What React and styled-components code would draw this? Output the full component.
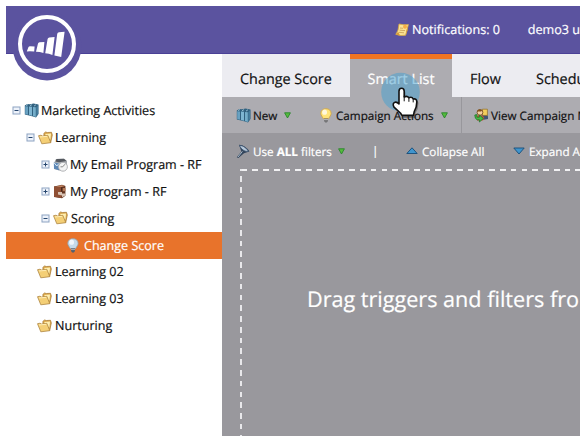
import React from 'react';
import styled, { createGlobalStyle, css } from 'styled-components';

const Global = createGlobalStyle`
  body { margin: 0; background: #fff; font-family: "Open Sans", sans-serif; color: #111; text-rendering: geometricPrecision; -webkit-text-stroke: 0.2px currentColor; }
  * { box-sizing: border-box; }
  svg { display: block; flex: none; overflow: visible; }
`;

const Page = styled.div`
  width: 587px;
  height: 443px;
  padding: 6px 7px 7px 6px;
  overflow: hidden;
`;
const Frame = styled.div`
  position: relative;
  display: flex;
  flex-direction: column;
  width: 574px;
  height: 430px;
  overflow: hidden;
`;
const Header = styled.header`
  display: flex;
  flex: none;
  align-items: center;
  height: 48px;
  padding-left: 389px;
  background: #5b539f;
  border-bottom: 1px solid #4a4096;
  color: #fff;
  font-size: 12.6px;
  white-space: nowrap;
`;
const Notice = styled.span`
  width: 117px;
  margin-left: 3px;
`;
const Logo = styled.div`
  position: absolute;
  left: 5px;
  top: 4px;
`;
const Body = styled.div`
  display: flex;
  flex: 1;
  min-height: 0;
`;
const Sidebar = styled.nav`
  flex: none;
  width: 216px;
  padding-top: 43.5px;
`;
const TreeRow = styled.div`
  display: flex;
  align-items: center;
  height: 26.85px;
  padding-left: ${(p) => p.$indent}px;
  font-size: 12.55px;
  white-space: nowrap;
  ${(p) => p.$selected && css`
    background: #e8732b;
    color: #fff;
  `}
`;
const Toggle = styled.span`
  display: flex;
  width: 12px;
`;
const TreeIcon = styled.span`
  display: flex;
  width: ${(p) => p.$w || 18}px;
`;
const Main = styled.main`
  display: flex;
  flex-direction: column;
  flex: 1;
  min-width: 0;
  overflow: hidden;
  background: #99989d;
`;
const Tabs = styled.div`
  display: flex;
  flex: none;
  height: 43px;
  background: #ececf1;
`;
const Tab = styled.div`
  display: flex;
  flex: none;
  align-items: center;
  padding-left: 18px;
  width: ${(p) => p.$w}px;
  padding-top: 7px;
  font-size: 14.4px;
  white-space: nowrap;
  ${(p) => p.$active && css`
    background: #adacb1;
    border-top: 5px solid #ef7423;
    padding-top: 2px;
    color: #fff;
  `}
`;
const Bar = styled.div`
  display: flex;
  flex: none;
  align-items: center;
  height: 36px;
  padding-left: 14px;
  font-size: ${(p) => p.$size}px;
  white-space: nowrap;
  color: ${(p) => (p.$dark ? '#fff' : '#111')};
  background: ${(p) => (p.$dark ? '#99989d' : '#adacb1')};
`;
const BarItem = styled.div`
  display: flex;
  flex: none;
  align-items: center;
  width: ${(p) => p.$w}px;
`;
const BarIcon = styled.span`
  display: flex;
  flex: none;
  width: ${(p) => p.$w}px;
`;
const BarLabel = styled.span`
  flex: none;
  padding-top: 2px;
  width: ${(p) => p.$w}px;
`;
const Divider = styled.div`
  flex: none;
  width: 1px;
  height: 36px;
  margin-right: 12px;
  background: #98979c;
`;
const Canvas = styled.section`
  flex: 1;
  margin-left: 18px;
  background:
    repeating-linear-gradient(90deg, transparent 0 1.5px, #f1f1f3 1.5px 7.2px, transparent 7.2px 10.77px) 0 0 / 100% 2px no-repeat,
    repeating-linear-gradient(180deg, #e8e8eb 0 2px, transparent 2px 7.1px, #e8e8eb 7.1px 10.77px) 0 0 / 2px 100% no-repeat;
`;
const Hint = styled.p`
  margin: 115px 0 0 67px;
  font-size: 21.6px;
  line-height: 32px;
  color: #fff;
  white-space: nowrap;
`;
const Pointer = styled.div`
  position: absolute;
  left: 375px;
  top: 66px;
`;

const LogoMark = () => (
  <svg width="72" height="72" viewBox="0 0 72 72">
    <circle cx="36" cy="36" r="34.5" fill="#5b539f" />
    <circle cx="36" cy="34" r="27" fill="#5b539f" stroke="#fff" strokeWidth="4" />
    <path d="M15.8 41.5 17.5 37Q18 36.2 19 36.2L23.6 36.4 23.2 41.6Q19 41 15.8 41.5ZM25 41.8 27 33.6Q27.3 32.4 28.5 32.3L33.4 32 32.4 42.9Q29 41.8 25 41.8ZM34.2 43.3 36.6 29Q37 27.6 38.3 27.4L43.6 26.9 41.4 45Q38 43.5 34.2 43.3ZM43.4 45.4 46.2 24Q46.5 22.4 48 22.2L53.6 21.8 50.2 47Q47 46 43.4 45.4Z" fill="#fff" />
  </svg>
);
const BookIcon = () => (
  <svg width="15" height="15" viewBox="0 0 15 15">
    <path d="M.8 2.6 3.2 1 6 1.2 9.5.6 14.5 1.4V11L12 14.4 9 13.6 8 13.2 5 12.4 .8 11.4Z" fill="#31617f" />
    <path d="M1.2 3.2 4 3.5V11.8L1.2 11Z" fill="#68a1c1" />
    <path d="M5 3.4 8 3.7V12.8L5 12Z" fill="#7fb6d2" />
    <path d="M9 3.9 11.8 4.3V13.9L9 13.1Z" fill="#75aeca" />
    <path d="M12.3 4.2 14.2 1.9V10.8L12.3 13.4Z" fill="#467d9d" />
    <path d="M2 2.6 4 1.5M6 2.8 8 1.6M10 3.1 12 1.7" stroke="#a9cfe2" strokeWidth=".8" />
  </svg>
);
const FolderIcon = () => (
  <svg width="15" height="14" viewBox="0 0 15 14">
    <path d="M5.8 2.5 7.5 1 9.3 1.5 13.5 1.3 14.3 4 12.7 11.5 7 10Z" fill="#dda94c" stroke="#a97d38" strokeWidth=".8" />
    <path d="M7.5 3 13 2.5 12.4 8.5 7 9Z" fill="#fff0b2" />
    <path d="M.5 4.7 3 4.2 4.5 5 9.8 4.3 12.8 11.7 3.8 12.8Z" fill="#f4cf76" stroke="#af8643" strokeWidth=".8" />
    <path d="M2 6 9.2 5.3" stroke="#ffedb5" />
  </svg>
);
const ToggleIcon = ({ plus }) => (
  <svg width="9" height="9" viewBox="0 0 9 9">
    <rect x="1" y="1" width="7" height="7" fill="#edf2fa" stroke="#8da3c2" />
    <path d={plus ? 'M2.5 4.5H6.5M4.5 2.5V6.5' : 'M2.5 4.5H6.5'} stroke="#26466e" />
  </svg>
);
const MailIcon = () => (
  <svg width="15" height="14" viewBox="0 0 15 14">
    <path d="M1 5 3 1 11 .8 14 3V7L8 13 1 11Z" fill="#a4a8ad" />
    <path d="M3.5 1 11 .8 13.5 3 6 4.3 2.5 3.4Z" fill="#55595f" />
    <path d="M.8 4.5 6 5.4V12.3L1 10.7Z" fill="#5d88b6" />
    <path d="M1 4.7 3.8 8 6 5.5" stroke="#dcecf7" fill="none" />
    <circle cx="10" cy="8.8" r="4.4" fill="#f3f4f4" stroke="#b3b5b8" />
    <path d="M12 6.2 9.7 8.8H7.5" stroke="#888" fill="none" />
  </svg>
);
const ProgramIcon = () => (
  <svg width="14" height="15" viewBox="0 0 14 15">
    <path d="M1 2.5 9 .8 12.4 2V11.8L9 14.3 1 13Z" fill="#633320" />
    <path d="M1 2.5 8.5 3.3V14.1L1 12.8Z" fill="#8f4f33" />
    <path d="M2 2.4 9 1.2 12 2 8.3 3Z" fill="#c88a65" />
    <path d="M5 8H9V9.5H12.5V11.5L9 13.2V11.5L5 10.5Z" fill="#d8c3b4" />
    <path d="M9.6 4H12.5V7.2H9.6Z" fill="#b47a58" />
    <path d="M8.7 3.4V7.5" stroke="#3e2018" />
  </svg>
);
const BulbIcon = ({ gray }) => (
  <svg width="12" height="15" viewBox="0 0 12 15">
    <path d="M6 .7C2.8.7.8 2.8.8 5.4c0 2 1.6 3.2 2.4 5.2h5.5c.8-2 2.4-3.2 2.4-5.2C11.1 2.8 9.2.7 6 .7Z" fill={gray ? '#c6dbea' : '#ffe479'} stroke={gray ? '#91a3b1' : '#d3a53d'} strokeWidth=".8" />
    <ellipse cx="4.6" cy="4.2" rx="2.4" ry="2.6" fill="#fff" opacity=".75" />
    <path d="M4 10.5H8V13L6.9 14.4H5.1L4 13Z" fill={gray ? '#52606d' : '#757577'} />
    <path d="M4 11.6H8" stroke="#d6d6d6" strokeWidth=".7" />
  </svg>
);
const NoteIcon = () => (
  <svg width="14" height="14" viewBox="0 0 14 14">
    <path d="M4 1Q8 2.2 13.4 1.6L10.7 12.2Q6 13.2 .8 11.4 3.6 8 4 1Z" fill="#fae394" stroke="#d9a944" strokeWidth=".8" />
    <path d="M.8 11.4 3.2 8.8 5 12.5ZM10.5 12.3 12.6 7.5V3Z" fill="#d79c39" />
    <path d="M5 5 8 5.3M4.6 7.2 10 7.6M4 9.3 9 9.8" stroke="#c79c52" strokeWidth=".8" />
    <circle cx="10" cy="3.7" r="2" fill="#f7ae46" />
  </svg>
);
const DownGreen = () => (
  <svg width="7" height="7" viewBox="0 0 7 7">
    <path d="M.6.8H6.4L3.5 6Z" fill="#55bb3c" stroke="#28862b" strokeWidth=".9" />
  </svg>
);
const FunnelIcon = () => (
  <svg width="14" height="15" viewBox="0 0 14 15">
    <path d="M3 .8C7 .8 12 4.2 13.4 7.6L8 9.2 2.4 14 .8 13.2 5.4 7.4Z" fill="#33455b" />
    <path d="M3.6 1.4C7 1.4 11 4.4 12.4 7.4 9 8 4.6 5 3.6 1.4Z" fill="#b4c6d8" stroke="#3b5370" strokeWidth=".8" />
    <path d="M6.4 7.4 2 13" stroke="#a8b9c9" strokeWidth="1" />
  </svg>
);
const PeopleIcon = () => (
  <svg width="15" height="15" viewBox="0 0 15 15">
    <path d="M7.5 7C8 5.4 14 5.4 14 8.5V11L8 12Z" fill="#3f5474" />
    <path d="M8.4 1.2H13.4V7.4H8.4Z" fill="#f3cf5c" stroke="#8f6d2b" strokeWidth=".7" />
    <path d="M3 8C4 6.4 9 6.4 10.4 10L9 12.4H3Z" fill="#c75739" />
    <circle cx="6" cy="4.4" r="2.9" fill="#f3cd9e" stroke="#765022" strokeWidth=".9" />
    <path d="M3 3.4Q4 .2 8.4 2.4L7 3.4Z" fill="#83521d" />
    <path d="M.8 7 2.8 6.6V9.2H5.4V7L9.4 10.4 5.4 14V11.8H3.2Q.8 11 .8 7Z" fill="#47bd42" stroke="#20762b" strokeWidth=".8" />
  </svg>
);
const Triangle = ({ down }) => (
  <svg width="12" height="8" viewBox="0 0 12 8">
    <path d={down ? 'M.8 1H11.2L6 7Z' : 'M.8 6.5H11.2L6 .8Z'} fill="#4095cd" stroke="#174d78" strokeWidth=".9" />
  </svg>
);
const HandPointer = () => (
  <svg width="42" height="46" viewBox="0 0 42 46">
    <circle cx="19.5" cy="20" r="19.3" fill="#46a1cf" opacity=".52" />
    <g transform="translate(0 1.8)">
      <path d="M18 17.5Q18 14.5 20.5 14.5 23.2 14.5 23.2 17.5V23.7Q26 20.8 28.1 24 31 21.8 32.4 25.3 36.2 24 36.2 28.2 36.2 33.4 33.3 37.8V42.5H20V39.2L13.3 33.3Q11 29.4 14 28.8 16.2 28.6 18 31.2Z" transform="translate(1.2 1.6)" fill="#222" opacity=".4" />
      <path d="M18 17.5Q18 14.5 20.5 14.5 23.2 14.5 23.2 17.5V23.2Q26 21.6 27.9 23.9 31 22.6 32.2 25.2 35.8 24.6 35.8 28.2 35.8 33.4 33.3 37.6L32.4 41.6H21L19.4 39.2 13 33.3Q11 29.4 14 28.4 16.2 28 18 30.2Z" fill="#fff" stroke="#111" strokeWidth="1.6" strokeLinejoin="round" />
      <path d="M23.2 22V27.5M27.9 24V28M32.2 25.3V28.6" stroke="#111" strokeWidth="1" />
    </g>
  </svg>
);

const tree = [
  { label: 'Marketing Activities', indent: 6, toggle: 'minus', icon: <BookIcon />, w: 17 },
  { label: 'Learning', indent: 20, toggle: 'minus', icon: <FolderIcon />, w: 17 },
  { label: 'My Email Program - RF', indent: 35, toggle: 'plus', icon: <MailIcon />, w: 17 },
  { label: 'My Program - RF', indent: 35, toggle: 'plus', icon: <ProgramIcon />, w: 17 },
  { label: 'Scoring', indent: 35, toggle: 'minus', icon: <FolderIcon />, w: 18 },
  { label: 'Change Score', indent: 61, icon: <BulbIcon gray />, w: 17, selected: true },
  { label: 'Learning 02', indent: 31, icon: <FolderIcon />, w: 18 },
  { label: 'Learning 03', indent: 31, icon: <FolderIcon />, w: 18 },
  { label: 'Nurturing', indent: 31, icon: <FolderIcon />, w: 18 },
];

export default function App() {
  return (
    <Page>
      <Global />
      <Frame>
        <Header>
          <NoteIcon />
          <Notice>Notifications: 0</Notice>
          <span>demo3 u</span>
        </Header>
        <Body>
          <Sidebar>
            {tree.map((n) => (
              <TreeRow key={n.label} $indent={n.indent} $selected={n.selected}>
                {n.toggle && <Toggle><ToggleIcon plus={n.toggle === 'plus'} /></Toggle>}
                <TreeIcon $w={n.w}>{n.icon}</TreeIcon>
                <span>{n.label}</span>
              </TreeRow>
            ))}
          </Sidebar>
          <Main>
            <Tabs>
              <Tab $w={127.5}>Change Score</Tab>
              <Tab $w={102.5} $active>Smart List</Tab>
              <Tab $w={66}>Flow</Tab>
              <Tab $w={62}>Schedu</Tab>
            </Tabs>
            <Bar $size={11.7}>
              <BarItem $w={84}>
                <BarIcon $w={17}><BookIcon /></BarIcon>
                <BarLabel $w={31}>New</BarLabel>
                <DownGreen />
              </BarItem>
              <BarItem $w={141}>
                <BarIcon $w={16}><BulbIcon /></BarIcon>
                <BarLabel $w={105}>Campaign Actions</BarLabel>
                <DownGreen />
              </BarItem>
              <Divider />
              <BarIcon $w={17}><PeopleIcon /></BarIcon>
              <BarLabel>View Campaign M</BarLabel>
            </Bar>
            <Bar $size={11.7} $dark>
              <BarItem $w={136}>
                <BarIcon $w={17}><FunnelIcon /></BarIcon>
                <BarLabel $w={85}>Use <b>ALL</b> filters</BarLabel>
                <DownGreen />
              </BarItem>
              <BarItem $w={34}>|</BarItem>
              <BarItem $w={107}>
                <BarIcon $w={16}><Triangle /></BarIcon>
                <BarLabel>Collapse All</BarLabel>
              </BarItem>
              <BarIcon $w={16}><Triangle down /></BarIcon>
              <BarLabel>Expand A</BarLabel>
            </Bar>
            <Canvas>
              <Hint>Drag triggers and filters fro</Hint>
            </Canvas>
          </Main>
        </Body>
        <Logo><LogoMark /></Logo>
        <Pointer><HandPointer /></Pointer>
      </Frame>
    </Page>
  );
}
